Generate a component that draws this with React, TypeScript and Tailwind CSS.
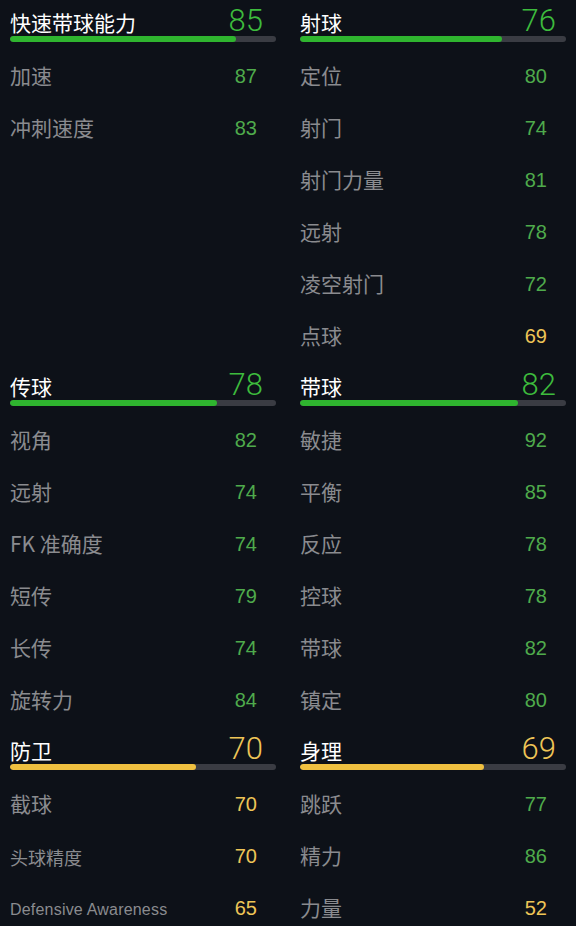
import React from "react";

type Row = { label: string; value: number; size?: "small" | "mid" };
type Section = { title: string; value: number; rows: Row[] };

const good = (v: number) => v > 70;

function Header({ s, right }: { s: Section; right?: boolean }) {
  return (
    <div className="h-[52px] flex flex-col">
      <div className={`h-[36px] flex items-end justify-between ${right ? "pr-[10px]" : "pr-[13px]"}`}>
        <span className="text-[21px] leading-[28px] text-white">{s.title}</span>
        <span
          className={`font-['Roboto',sans-serif] font-light text-[31px] leading-[30px] ${
            good(s.value) ? "text-[#3dbb3d]" : "text-[#eec557]"
          }`}
        >
          {s.value}
        </span>
      </div>
      <div className="h-[6px] rounded-full bg-[#3a3c43] overflow-hidden">
        <div
          className={`h-full rounded-full ${good(s.value) ? "bg-[#2fb52f]" : "bg-[#efc040]"}`}
          style={{ width: `${s.value}%` }}
        />
      </div>
    </div>
  );
}

function Label({ r }: { r: Row }) {
  if (r.size === "small")
    return (
      <span className="font-['Liberation_Sans',sans-serif] text-[16px] tracking-[0.2px] text-[#8a8b8f] pt-[4px]">
        {r.label}
      </span>
    );
  if (r.size === "mid") return <span className="text-[18px] text-[#8a8b8f] pt-[2px]">{r.label}</span>;
  return <span className="text-[21px] text-[#8a8b8f]">{r.label}</span>;
}

function Column({ s, right }: { s: Section; right?: boolean }) {
  return (
    <div className="flex flex-col">
      <Header s={s} right={right} />
      {s.rows.map((r) => (
        <div key={r.label} className="h-[52px] flex items-center justify-between pb-[4px] pr-[19px]">
          <Label r={r} />
          <span
            className={`font-['Liberation_Sans',sans-serif] text-[20px] ${
              good(r.value) ? "text-[#4fab4c]" : "text-[#eec557]"
            }`}
          >
            {r.value}
          </span>
        </div>
      ))}
    </div>
  );
}

const blocks: { left: Section; right: Section }[] = [
  {
    left: { title: "快速带球能力", value: 85, rows: [ { label: "加速", value: 87 }, { label: "冲刺速度", value: 83 } ] },
    right: {
      title: "射球",
      value: 76,
      rows: [
        { label: "定位", value: 80 },
        { label: "射门", value: 74 },
        { label: "射门力量", value: 81 },
        { label: "远射", value: 78 },
        { label: "凌空射门", value: 72 },
        { label: "点球", value: 69 },
      ],
    },
  },
  {
    left: {
      title: "传球",
      value: 78,
      rows: [
        { label: "视角", value: 82 },
        { label: "远射", value: 74 },
        { label: "FK 准确度", value: 74 },
        { label: "短传", value: 79 },
        { label: "长传", value: 74 },
        { label: "旋转力", value: 84 },
      ],
    },
    right: {
      title: "带球",
      value: 82,
      rows: [
        { label: "敏捷", value: 92 },
        { label: "平衡", value: 85 },
        { label: "反应", value: 78 },
        { label: "控球", value: 78 },
        { label: "带球", value: 82 },
        { label: "镇定", value: 80 },
      ],
    },
  },
  {
    left: {
      title: "防卫",
      value: 70,
      rows: [
        { label: "截球", value: 70 },
        { label: "头球精度", value: 70, size: "mid" },
        { label: "Defensive Awareness", value: 65, size: "small" },
      ],
    },
    right: {
      title: "身理",
      value: 69,
      rows: [
        { label: "跳跃", value: 77 },
        { label: "精力", value: 86 },
        { label: "力量", value: 52 },
      ],
    },
  },
];

export default function App() {
  return (
    <div className="w-[576px] h-[926px] overflow-hidden bg-[#0d1118] px-[10px] font-['Noto_Sans_CJK_SC','Noto_Sans',sans-serif]">
      {blocks.map((b, i) => (
        <div key={i} className="grid grid-cols-2 gap-x-[24px]">
          <Column s={b.left} />
          <Column s={b.right} right />
        </div>
      ))}
    </div>
  );
}
